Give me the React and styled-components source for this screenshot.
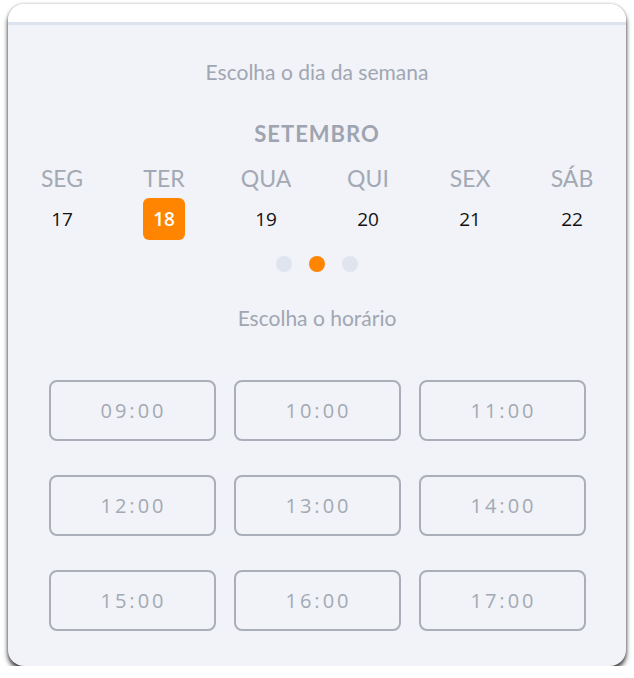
import React, { useState } from "react";
import styled, { createGlobalStyle } from "styled-components";

const GlobalStyle = createGlobalStyle`
  html, body {
    margin: 0;
    padding: 0;
    background: #ffffff;
  }
  body {
    font-family: "Lato", "Open Sans", sans-serif;
  }
`;

const days = [
  { name: "SEG", num: 17 },
  { name: "TER", num: 18 },
  { name: "QUA", num: 19 },
  { name: "QUI", num: 20 },
  { name: "SEX", num: 21 },
  { name: "SÁB", num: 22 },
];

const hours = ["09:00", "10:00", "11:00", "12:00", "13:00", "14:00", "15:00", "16:00", "17:00"];

export default function App() {
  const [selectedDay, setSelectedDay] = useState(18);
  const [selectedHour, setSelectedHour] = useState();

  return (
    <>
      <GlobalStyle />
      <Card>
        <TopBar />
        <Content>
          <Subtitle>Escolha o dia da semana</Subtitle>
          <Month>SETEMBRO</Month>
          <Week>
            {days.map((d) => (
              <Day key={d.name} onClick={() => setSelectedDay(d.num)}>
                <DayName>{d.name}</DayName>
                <DayNumber $active={selectedDay === d.num}>{d.num}</DayNumber>
              </Day>
            ))}
          </Week>
          <Dots>
            <Dot />
            <Dot $active />
            <Dot />
          </Dots>
          <HourTitle>Escolha o horário</HourTitle>
          <Hours>
            {hours.map((h) => (
              <HourButton key={h} $active={selectedHour === h} onClick={() => setSelectedHour(h)}>
                {h}
              </HourButton>
            ))}
          </Hours>
        </Content>
      </Card>
    </>
  );
}

const Card = styled.div`
  box-sizing: border-box;
  margin: 4px 8px 0 8px;
  width: 618px;
  height: 662px;
  border-radius: 16px;
  background: #f1f3f8;
  overflow: hidden;
  box-shadow: 0 4px 5px rgba(0, 0, 0, 0.75), 0 0 3px rgba(0, 0, 0, 0.3);
  display: flex;
  flex-direction: column;
`;

const TopBar = styled.div`
  height: 18px;
  background: #ffffff;
  border-bottom: 3px solid #dde3ee;
  flex-shrink: 0;
`;

const Content = styled.div`
  display: flex;
  flex-direction: column;
  align-items: center;
`;

const Subtitle = styled.div`
  margin-top: 34px;
  font-size: 21px;
  line-height: 26px;
  color: #a0a6b2;
`;

const Month = styled.div`
  margin-top: 36px;
  font-size: 22px;
  line-height: 26px;
  letter-spacing: 1px;
  font-weight: 700;
  color: #9ea4b0;
`;

const Week = styled.div`
  margin-top: 17px;
  width: 612px;
  display: grid;
  grid-template-columns: repeat(6, 1fr);
`;

const Day = styled.div`
  display: flex;
  flex-direction: column;
  align-items: center;
  cursor: pointer;
`;

const DayName = styled.div`
  font-size: 23px;
  line-height: 28px;
  color: #a3a9b4;
`;

const DayNumber = styled.div`
  margin-top: 6px;
  width: 42px;
  height: 42px;
  border-radius: 6px;
  display: flex;
  align-items: center;
  justify-content: center;
  font-family: "Open Sans", sans-serif;
  font-size: 19px;
  font-weight: ${(p) => (p.$active ? 600 : 400)};
  color: ${(p) => (p.$active ? "#ffffff" : "#111111")};
  background: ${(p) => (p.$active ? "#ff8500" : "transparent")};
`;

const Dots = styled.div`
  margin-top: 16px;
  display: flex;
  gap: 17px;
`;

const Dot = styled.div`
  width: 16px;
  height: 16px;
  border-radius: 50%;
  background: ${(p) => (p.$active ? "#ff8500" : "#dfe4ee")};
`;

const HourTitle = styled(Subtitle)`
  margin-top: 33px;
`;

const Hours = styled.div`
  margin-top: 49px;
  display: grid;
  grid-template-columns: repeat(3, 167px);
  column-gap: 18px;
  row-gap: 34px;
`;

const HourButton = styled.button`
  height: 61px;
  border: 2px solid ${(p) => (p.$active ? "#ff8500" : "#a9aeb9")};
  border-radius: 8px;
  background: transparent;
  font-family: "Open Sans", sans-serif;
  font-size: 20px;
  letter-spacing: 3px;
  color: ${(p) => (p.$active ? "#ff8500" : "#a3a9b4")};
  cursor: pointer;
  padding: 0 0 0 3px;
`;
